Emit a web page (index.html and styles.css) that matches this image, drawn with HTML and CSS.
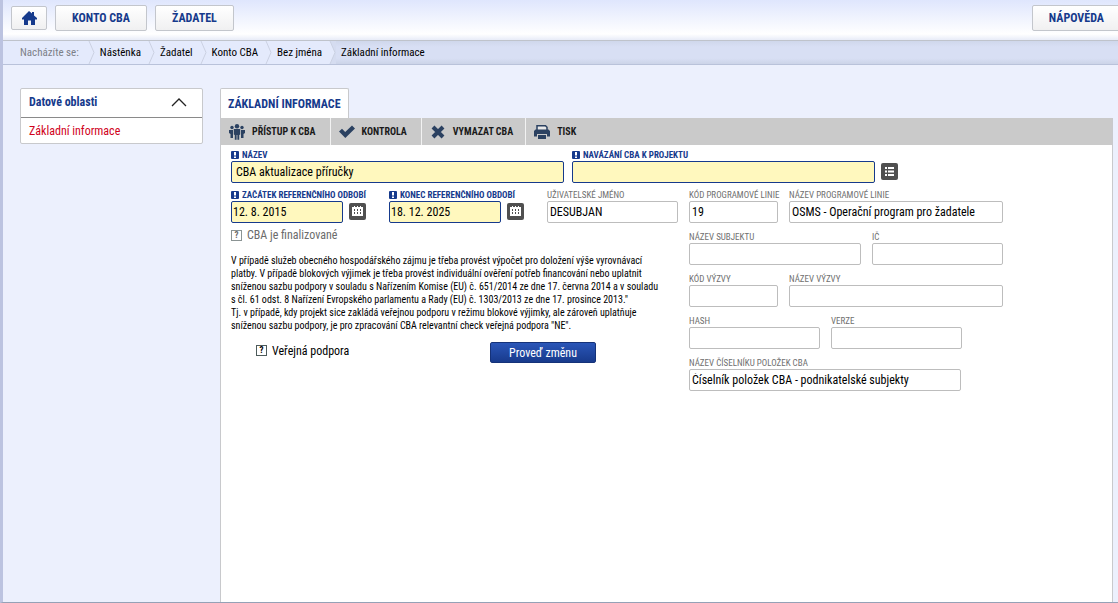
FILE: index.html
```html
<!DOCTYPE html>
<html lang="cs">
<head>
<meta charset="utf-8">
<title>Základní informace</title>
<link rel="stylesheet" href="styles.css">
</head>
<body>
<svg class="sprites" aria-hidden="true">
  <symbol id="calendar" viewBox="0 0 17 17"><path d="M3 4h11v9H3zM5 3h1v1H5zM8 3h1v1H8zM11 3h1v1h-1z" fill="#fff"/><path d="M5 6h1v2H5zM8 6h1v2H8zM11 6h1v2h-1zM5 9h1v2H5zM8 9h1v2H8zM11 9h1v2h-1z" fill="#505050"/></symbol>
  <symbol id="alert" viewBox="0 0 8 8"><rect width="8" height="8" rx="1" fill="#163a8c"/><path d="M3 1h2v3.500H3zM3 5.500h2V7H3z" fill="#fff"/></symbol>
</svg>
<header class="top">
  <button class="nav home" aria-label="Domů"><svg width="15" height="15" viewBox="0 0 15 15"><path d="M7 0 10 2.500V1h2v3.500L15 7v1.500h-2V14H9V9.500H6V14H2V8.500H0V7z" fill="#163a8c"/></svg></button>
  <button class="nav">KONTO CBA</button>
  <button class="nav">ŽADATEL</button>
  <button class="nav help">NÁPOVĚDA</button>
</header>
<nav class="crumbs" aria-label="Nacházíte se">
  <span class="crumb lead">Nacházíte se:<svg class="sep" viewBox="0 0 7 23"><path d="M1 0 6 11.500 1 23"/></svg></span>
  <a class="crumb" href="#">Nástěnka<svg class="sep" viewBox="0 0 7 23"><path d="M1 0 6 11.500 1 23"/></svg></a>
  <a class="crumb" href="#">Žadatel<svg class="sep" viewBox="0 0 7 23"><path d="M1 0 6 11.500 1 23"/></svg></a>
  <a class="crumb" href="#">Konto CBA<svg class="sep" viewBox="0 0 7 23"><path d="M1 0 6 11.500 1 23"/></svg></a>
  <a class="crumb" href="#">Bez jména<svg class="sep last" viewBox="0 0 7 23"><path class="fill" d="M0 0h1L6 11.500 1 23H0z"/><path d="M1 0 6 11.500 1 23"/></svg></a>
  <span class="crumb current">Základní informace</span>
</nav>
<div class="page">
  <aside class="side">
    <button class="side-head">Datové oblasti<svg width="16" height="9" viewBox="0 0 16 9"><path d="M1 8 8 1l7 7" fill="none" stroke="#222" stroke-width="1.300"/></svg></button>
    <a class="side-item" href="#">Základní informace</a>
  </aside>
  <main class="main">
    <h1 class="tab">ZÁKLADNÍ INFORMACE</h1>
    <section class="panel">
      <div class="tools">
        <button class="tool"><svg width="16" height="16" viewBox="0 0 16 16" fill="#2b4161"><circle cx="3" cy="3.500" r="1.700"/><circle cx="8" cy="2.200" r="2.200"/><circle cx="13" cy="3.500" r="1.700"/><path d="M0 6h4v8H1.500v-4L0 9zM16 6h-4v8h2.500v-4L16 9zM4.800 5h6.400v5.500l-1 .5v4.800H8.400V11h-.8v4.800H5.800V11l-1-.5z"/></svg>PŘÍSTUP K CBA</button>
        <button class="tool"><svg width="16" height="16" viewBox="0 0 16 16"><path d="M0 7.500 3 4.800 6.200 8 13 1.500 16 4.500 6.300 14z" fill="#2b4161"/></svg>KONTROLA</button>
        <button class="tool wide"><svg width="16" height="16" viewBox="0 0 16 16"><path d="M3 3l10 10M13 3 3 13" stroke="#2b4161" stroke-width="4"/></svg>VYMAZAT CBA</button>
        <button class="tool"><svg width="16" height="16" viewBox="0 0 16 16"><path d="M3 6V1.700h8.500L13 3.200V6" fill="#e8e8e8" stroke="#2b4161" stroke-width="1.500"/><path d="M1.500 5.500h13L16 7v5.500h-3V10H3v2.500H0V7z" fill="#2b4161"/><path d="M4 11h8v4H4z" fill="#2b4161"/></svg>TISK</button>
      </div>
      <form class="form">
        <div class="row first">
          <div class="field required w333"><label for="name"><svg class="mark"><use href="#alert"/></svg>NÁZEV</label><input id="name" class="roomy" value="CBA aktualizace příručky"></div>
          <div class="field required w303"><label for="project"><svg class="mark"><use href="#alert"/></svg>NAVÁZÁNÍ CBA K PROJEKTU</label><input id="project"></div>
          <button type="button" class="pick" aria-label="Vybrat projekt"><svg width="17" height="17" viewBox="0 0 17 17"><path d="M4 4h2v2H4zM7 4h6v2H7zM4 7.500h2v2H4zM7 7.500h6v2H7zM4 11h2v2H4zM7 11h6v2H7z" fill="#fff"/></svg></button>
        </div>
        <div class="columns">
          <div class="left">
            <div class="row dates">
              <div class="field required w112"><label for="from"><svg class="mark"><use href="#alert"/></svg>ZAČÁTEK REFERENČNÍHO ODBOBÍ</label><input id="from" value="12. 8. 2015"></div>
              <button type="button" class="pick" aria-label="Kalendář začátku"><svg width="17" height="17"><use href="#calendar"/></svg></button>
              <div class="field required w112 second"><label for="to"><svg class="mark"><use href="#alert"/></svg>KONEC REFERENČNÍHO OBDOBÍ</label><input id="to" value="18. 12. 2025"></div>
              <button type="button" class="pick" aria-label="Kalendář konce"><svg width="17" height="17"><use href="#calendar"/></svg></button>
              <div class="field w131 user"><label for="user">UŽIVATELSKÉ JMÉNO</label><input id="user" value="DESUBJAN"></div>
            </div>
            <label class="check muted"><input type="checkbox">CBA je finalizované</label>
            <p class="note">V případě služeb obecného hospodářského zájmu je třeba provést výpočet pro doložení výše vyrovnávací<br>platby. V případě blokových výjimek je třeba provést individuální ověření potřeb financování nebo uplatnit<br>sníženou sazbu podpory v souladu s Nařízením Komise (EU) č. 651/2014 ze dne 17. června 2014 a v souladu<br>s čl. 61 odst. 8 Nařízení Evropského parlamentu a Rady (EU) č. 1303/2013 ze dne 17. prosince 2013."<br>Tj. v případě, kdy projekt sice zakládá veřejnou podporu v režimu blokové výjimky, ale zároveň uplatňuje<br>sníženou sazbu podpory, je pro zpracování CBA relevantní check veřejná podpora "NE".</p>
            <div class="actions">
              <label class="check"><input type="checkbox">Veřejná podpora</label>
              <button type="button" class="apply">Proveď změnu</button>
            </div>
          </div>
          <div class="right">
            <div class="row"><div class="field w89"><label for="line">KÓD PROGRAMOVÉ LINIE</label><input id="line" value="19"></div><div class="field w214"><label for="linename">NÁZEV PROGRAMOVÉ LINIE</label><input id="linename" value="OSMS - Operační program pro žadatele"></div></div>
            <div class="row"><div class="field w172"><label for="subject">NÁZEV SUBJEKTU</label><input id="subject"></div><div class="field w131"><label for="ic">IČ</label><input id="ic"></div></div>
            <div class="row"><div class="field w89"><label for="call">KÓD VÝZVY</label><input id="call"></div><div class="field w214"><label for="callname">NÁZEV VÝZVY</label><input id="callname"></div></div>
            <div class="row"><div class="field w131"><label for="hash">HASH</label><input id="hash"></div><div class="field w131"><label for="version">VERZE</label><input id="version"></div></div>
            <div class="row"><div class="field w272"><label for="list">NÁZEV ČÍSELNÍKU POLOŽEK CBA</label><input id="list" value="Číselník položek CBA - podnikatelské subjekty"></div></div>
          </div>
        </div>
      </form>
    </section>
  </main>
</div>
</body>
</html>
```
FILE: styles.css
```css
* { box-sizing: border-box; }
body {
  display: flex;
  flex-direction: column;
  min-height: 100vh;
  margin: 0;
  border-left: 3px solid #bcc3e0;
  border-bottom: 1px solid #95a1b6;
  background: #ecf0fd;
  color: #000;
  font-family: "Roboto Condensed", "Liberation Sans Narrow", Roboto, sans-serif;
  font-size: 12px;
  overflow-x: hidden;
}
button, input { font: inherit; color: inherit; }
button { padding: 0; border: 0; background: none; }
a { color: inherit; text-decoration: none; }
.sprites { position: absolute; width: 0; height: 0; }

.top {
  display: flex;
  align-items: flex-start;
  gap: 8px;
  height: 41px;
  padding: 5px 0 0 8px;
  overflow: hidden;
  border-bottom: 1px solid #bfc3cb;
  background: linear-gradient(#dfe6fd, #fff 85%, #e8ecf8);
}
.nav {
  flex: none;
  height: 26px;
  padding: 0 16px;
  border: 1px solid #c3c6cc;
  border-radius: 2px;
  background: linear-gradient(#fff, #f0f0f1);
  color: #163a8c;
  font-weight: bold;
}
.home { width: 36px; height: 24px; margin-top: 1px; padding: 0; }
.home svg { display: block; margin: auto; }
.help { margin: 0 -3px 0 auto; }

.crumbs {
  display: flex;
  height: 24px;
  border-bottom: 1px solid #b9c2da;
  background: linear-gradient(#cfd7eb, #d8dff4 25%, #d8dff4 75%, #ccd4e8);
  font-size: 11px;
  line-height: 23px;
}
.crumb { display: flex; padding-left: 5px; background: #e4eafc; white-space: nowrap; }
.sep { width: 7px; height: 23px; margin-left: 7px; fill: none; stroke: #cbd1e2; }
.lead { padding-left: 17px; color: #7c8088; }
.lead .sep { margin-left: 9px; }
.current { background: none; }
.last { background: #d5dcf0; }
.fill { fill: #e4eafc; stroke: none; }

.page { display: flex; flex: 1; align-items: stretch; gap: 17px; padding: 23px 5px 0 17px; }
.side { flex: none; align-self: flex-start; width: 183px; border: 1px solid #c8c9cc; border-radius: 2px; background: #fff; }
.side-head {
  display: flex;
  align-items: center;
  justify-content: space-between;
  width: 100%;
  height: 29px;
  padding: 0 15px 2px 8px;
  border-bottom: 1px solid #8a8a8a;
  color: #163a8c;
  font-weight: bold;
}
.side-item { display: block; height: 25px; padding-left: 8px; color: #d0021b; line-height: 26px; }

.main { display: flex; flex: 1; flex-direction: column; min-width: 0; }
.tab {
  align-self: flex-start;
  height: 30px;
  margin: 0;
  padding: 0 7px;
  border: 1px solid #c8c9cc;
  border-bottom: 0;
  border-radius: 2px 2px 0 0;
  background: #fff;
  color: #163a8c;
  font-size: 12px;
  line-height: 30px;
}
.panel { flex: 1; border: 1px solid #c8c9cc; border-width: 0 1px; background: #fff; }
.tools { display: flex; height: 27px; background: #cacaca; color: #1a1a1a; font-size: 10px; font-weight: bold; }
.tool { display: flex; align-items: center; gap: 7px; padding: 0 14px 0 8px; border-left: 1px solid #f2f2f2; }
.tool:first-child { border-left: 0; }
.tool.wide { padding-right: 12px; }

.form { padding: 4px 10px; }
.row { display: flex; align-items: flex-end; gap: 11px; }
.row.first { gap: 6px; }
.first .w303 { margin-left: 2px; }
.field { flex: none; color: #707070; }
.field label { display: flex; align-items: center; height: 12px; font-size: 9px; white-space: nowrap; }
.field input {
  display: block;
  width: 100%;
  height: 22px;
  padding: 0 2px;
  border: 1px solid #bdbdbd;
  border-radius: 2px;
  background: #fff;
  color: #000;
}
.required { color: #163a8c; font-weight: bold; }
.required input { padding: 0 1px; border-color: #163a8c; background: #fff8be; font-weight: normal; }
.required input.roomy { padding: 0 4px; }
.mark { flex: none; width: 8px; height: 8px; margin-right: 3px; }
.w89 { width: 89px; } .w112 { width: 112px; } .w131 { width: 131px; }
.w172 { width: 172px; } .w214 { width: 214px; } .w272 { width: 272px; }
.w303 { width: 303px; } .w333 { width: 333px; }
.pick { width: 17px; height: 17px; margin-bottom: 3px; border-radius: 2px; background: #505050; }
.pick svg { display: block; }

.columns { display: flex; gap: 11px; margin-top: 6px; }
.left { flex: none; width: 447px; }
.dates { gap: 6px; }
.second { margin-left: 17px; }
.user { margin-left: auto; }
.right { display: flex; flex-direction: column; gap: 8px; }
.check { display: flex; align-items: center; gap: 5px; }
.check input {
  display: grid;
  place-items: center;
  width: 11px;
  height: 11px;
  margin: 0;
  border: 1px solid #4d5b5b;
  appearance: none;
  background: #fff;
  font-size: 9px;
  font-weight: bold;
  line-height: 9px;
}
.check input::before { content: "?"; }
.muted { height: 24px; color: #6b6b6b; }
.muted input { border-color: #8b9494; }
.note { margin: 7px 0 10px; font-size: 10px; line-height: 13px; white-space: nowrap; }
.actions { display: flex; align-items: center; justify-content: space-between; padding: 0 82px 0 25px; }
.actions .check { padding-bottom: 4px; }
.apply {
  width: 106px;
  height: 21px;
  border: 1px solid #153279;
  border-radius: 2px;
  background: linear-gradient(#2a56b8, #183a8c);
  color: #fff;
}
```
